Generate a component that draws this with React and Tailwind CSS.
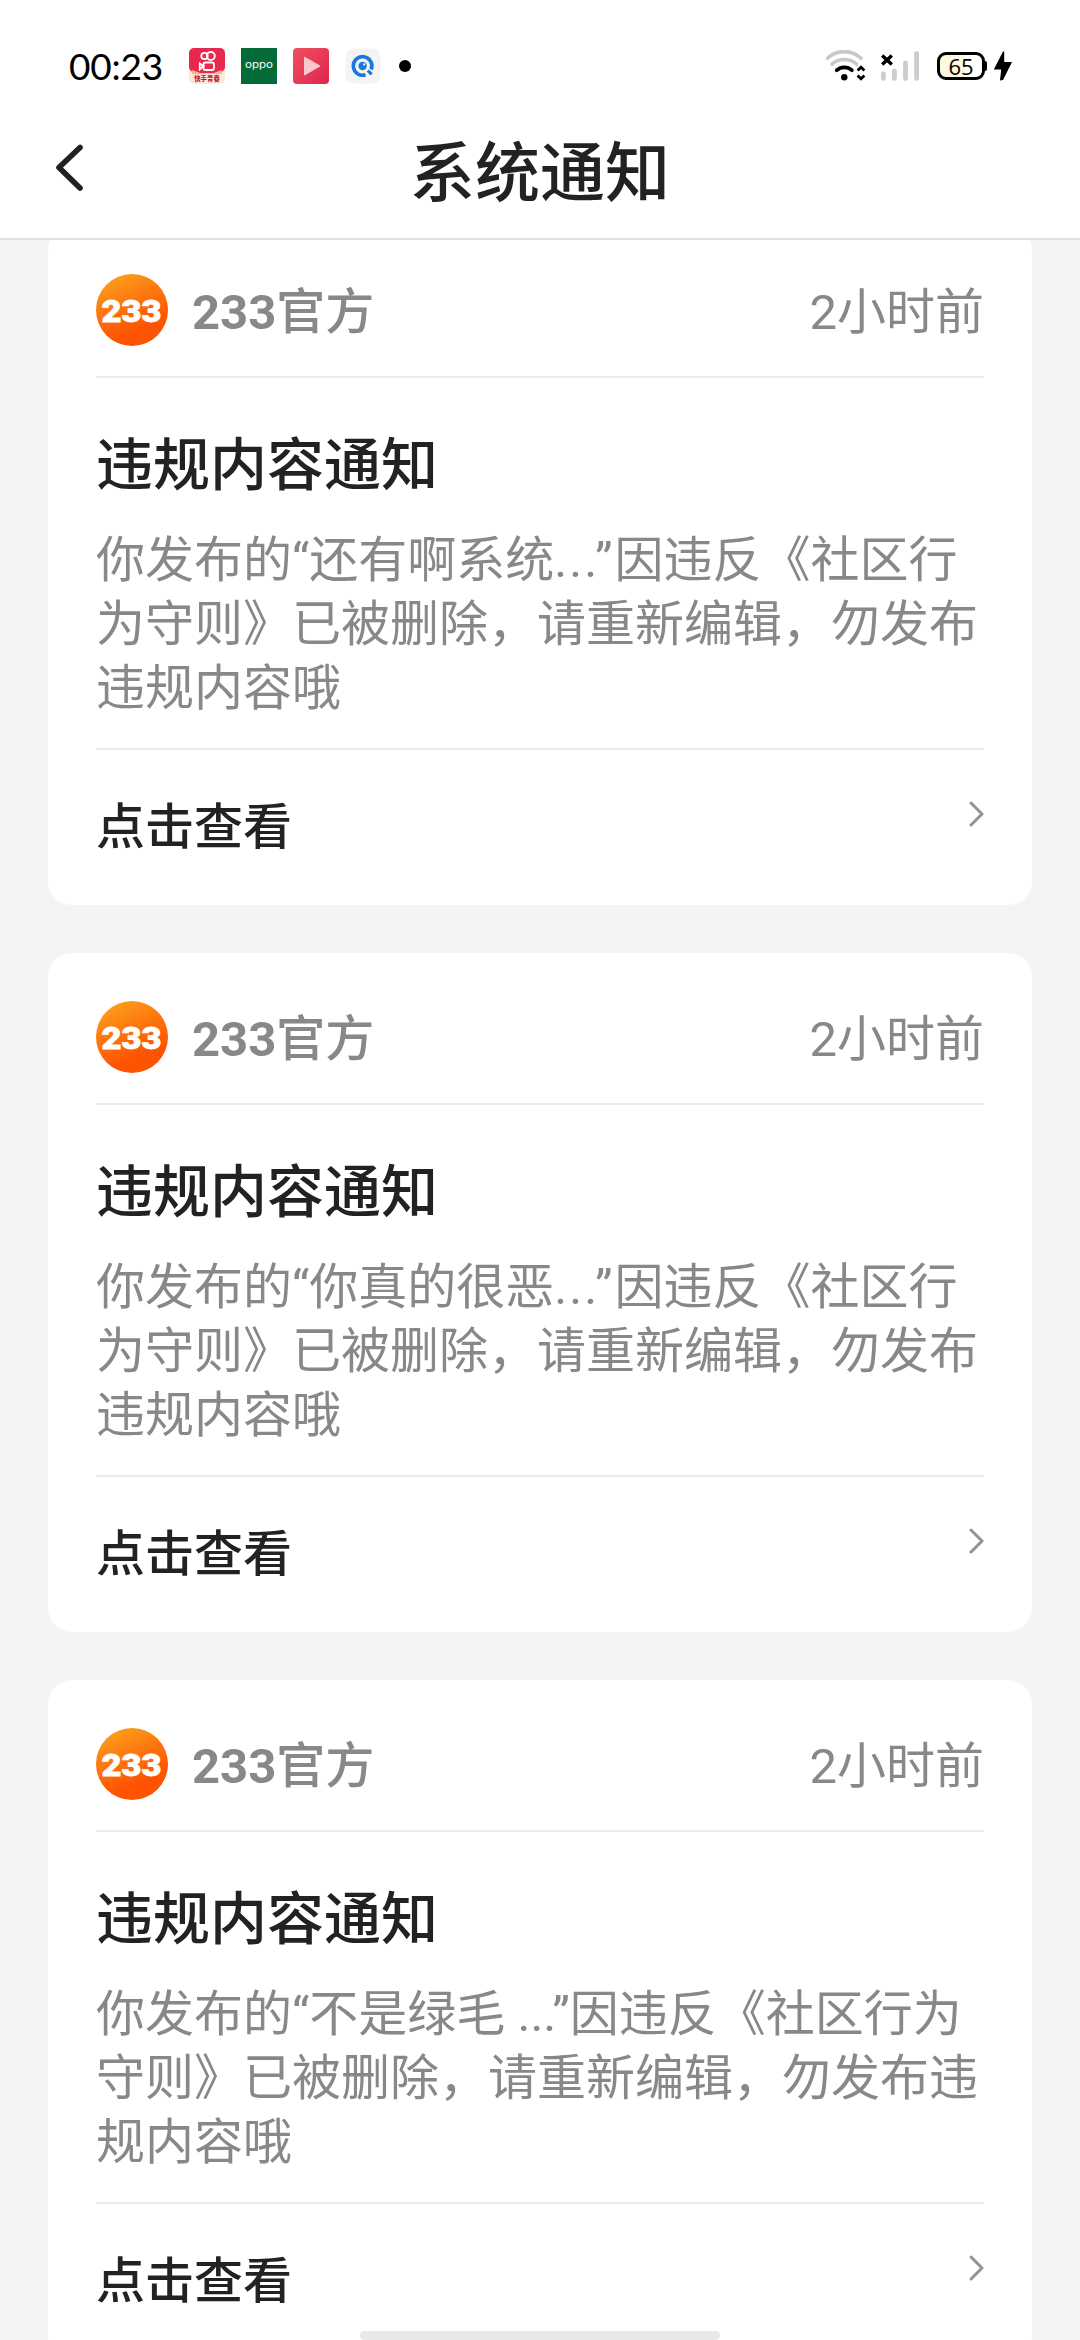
import React from 'react';
import { clsx } from 'clsx';

const notices = [
    { id: 1, quote: '还有啊系统', tail: '因违反《社区行', wide: true, lines: ['为守则》已被删除，请重新编辑，勿发布', '违规内容哦'] },
    { id: 2, quote: '你真的很恶', tail: '因违反《社区行', wide: true, lines: ['为守则》已被删除，请重新编辑，勿发布', '违规内容哦'] },
    { id: 3, quote: '不是绿毛 ', tail: '因违反《社区行为', wide: false, lines: ['守则》已被删除，请重新编辑，勿发布违', '规内容哦'] },
];

const VideoAppIcon = () => (
    <svg className="w-9 h-9" viewBox="0 0 36 36">
        <rect width="36" height="36" rx="5" fill="#fde9dc" />
        <path d="M5 0H31A5 5 0 0 1 36 5V20Q34 25 28 25H8Q2 25 0 20V5A5 5 0 0 1 5 0Z" fill="#e9284f" />
        <path d="M3 22Q18 29 33 22V26H3Z" fill="#f5b48c" />
        <g fill="none" stroke="#fff" strokeWidth="1.8">
            <circle cx="15.5" cy="8" r="3.2" />
            <circle cx="21.8" cy="8" r="4" />
            <rect x="14.5" y="14.5" width="10.5" height="7.5" rx="2" />
            <path d="M14.5 18L10.8 15.5V21.5Z" />
        </g>
        <text x="18" y="33" textAnchor="middle" fontSize="6.4" fontWeight="900" fill="#c51f35" className="font-['Noto_Sans_CJK_SC',sans-serif]">快手青春</text>
    </svg>
);

const OppoIcon = () => (
    <svg className="w-9 h-9 bg-[#046a38]" viewBox="0 0 36 36">
        <text x="4" y="20" fontSize="9.5" textLength="28" lengthAdjust="spacingAndGlyphs" fill="#fff" className="font-['Inter',sans-serif]">oppo</text>
    </svg>
);

const PlayIcon = () => (
    <svg className="w-9 h-9" viewBox="0 0 36 36">
        <defs>
            <linearGradient id="play" x1="0" y1="0" x2="1" y2="1">
                <stop offset="0" stopColor="#f0505f" />
                <stop offset="1" stopColor="#df2450" />
            </linearGradient>
        </defs>
        <rect width="36" height="36" rx="4" fill="url(#play)" />
        <path d="M11.5 9.2L27 18L11.5 27Z" fill="#fac8cf" stroke="#fac8cf" strokeLinejoin="round" />
    </svg>
);

const BrowserIcon = () => (
    <svg className="w-9 h-9" viewBox="0 0 36 36">
        <rect x="0.5" y="0.5" width="35" height="35" rx="8" fill="#f4f4f5" />
        <path d="M20.5 26.8A9.3 9.3 0 1 1 26.2 21.5" fill="none" stroke="#1c77dc" strokeWidth="3.6" />
        <circle cx="17.6" cy="18" r="4.2" fill="#1c77dc" />
        <circle cx="19.2" cy="16.4" r="1.1" fill="#fff" />
        <path d="M22.8 22.5L26.6 26.4" stroke="#1c77dc" strokeWidth="3.2" />
    </svg>
);

const WifiIcon = () => (
    <svg className="w-10 h-8" viewBox="0 0 40 32" fill="none">
        <path d="M1.5 8.2C11 -0.6 25.5 -0.6 35 8.2" stroke="#c9c9c9" strokeWidth="3.6" strokeLinecap="round" />
        <path d="M6 14.2C13 8 23.5 8 30.5 14.2" stroke="#c9c9c9" strokeWidth="3.6" strokeLinecap="round" />
        <path d="M10.8 20.2C15 16.4 21.6 16.4 25.8 20.2" stroke="#000" strokeWidth="3.8" strokeLinecap="round" />
        <circle cx="18.3" cy="27.3" r="3.2" fill="#000" />
        <path d="M31.6 20.4L35 17.2L38.4 20.4M31.6 25.6L35 28.8L38.4 25.6" stroke="#000" strokeWidth="2.8" />
    </svg>
);

const SignalIcon = () => (
    <svg className="w-10 h-8" viewBox="0 0 40 32" fill="none">
        <g stroke="#cdcdcd" strokeWidth="4.8" strokeLinecap="round">
            <path d="M3.4 24V28.5M14.4 21V28.5M25.5 13V28.5M36.6 3.5V28.5" />
        </g>
        <path d="M2.2 5.4L11.8 14.6M11.8 5.4L2.2 14.6" stroke="#000" strokeWidth="3.4" />
    </svg>
);

const BatteryIcon = () => (
    <div className="flex items-center">
        <div className="w-12 h-7 border-3 border-black rounded-[9px] bg-[linear-gradient(to_right,#fdf8df_62%,#fff_62%)] flex items-center justify-center font-['Open_Sans',sans-serif] text-[22px] leading-none">65</div>
        <div className="w-0.5 h-2.5 bg-black rounded-r-sm" />
        <svg className="w-5 h-[30px] ml-1.5" viewBox="0 0 20 30">
            <path d="M10 0.5L0.8 18.5H8.2L7 29.5L10 29L19 11H11.2V0.5Z" fill="#000" />
        </svg>
    </div>
);

const StatusBar = () => (
    <div className="h-[132px] pl-[69px] pr-[67px] flex items-center justify-between">
        <div className="flex items-center">
            <span className="w-[120px] pb-0.5 font-['Lato',sans-serif] text-[37px] leading-none tracking-[-0.2px]">00:23</span>
            <div className="flex items-center gap-4">
                <VideoAppIcon />
                <OppoIcon />
                <PlayIcon />
                <BrowserIcon />
                <div className="w-3 h-3 ml-0.5 rounded-full bg-black" />
            </div>
        </div>
        <div className="flex items-center">
            <WifiIcon />
            <div className="w-3.5" />
            <SignalIcon />
            <div className="w-[17px]" />
            <BatteryIcon />
        </div>
    </div>
);

const Header = () => (
    <header className="relative z-10 h-60 bg-white border-b-2 border-[#e0e0e0]">
        <StatusBar />
        <div className="h-[78px] px-[54px] flex items-start justify-between">
            <svg className="w-8 h-[50px] mt-[11px]" viewBox="0 0 32 50" fill="none" stroke="#222" strokeWidth="5.6" strokeLinecap="round" strokeLinejoin="round">
                <path d="M26 4.5L5 24.5L26 45" />
            </svg>
            <h1 className="pt-2.5 text-[65px] leading-none font-medium text-[#222]">系统通知</h1>
            <div className="w-8" />
        </div>
    </header>
);

const Avatar = () => (
    <svg className="w-[72px] h-[72px] mr-6" viewBox="0 0 72 72">
        <defs>
            <linearGradient id="avatar" x1="0.15" y1="0" x2="0.5" y2="0.8">
                <stop offset="0" stopColor="#fca51c" />
                <stop offset="0.5" stopColor="#fd7a10" />
                <stop offset="1" stopColor="#fe5402" />
            </linearGradient>
        </defs>
        <circle cx="36" cy="36" r="36" fill="url(#avatar)" />
        <text x="5.5" y="47.5" fontSize="32" fontWeight="900" textLength="60" lengthAdjust="spacingAndGlyphs" fill="#fff" stroke="#fff" strokeWidth="0.8" className="font-['Roboto',sans-serif]">233</text>
    </svg>
);

const NoticeCard = ({ notice, last }) => (
    <article className={clsx('h-[679px] shrink-0 bg-white rounded-3xl px-12 pt-12 text-[49px]', !last && 'mb-12')}>
        <div className="h-[104px] pb-[30px] border-b-2 border-[#ececec] flex items-center text-[#888]">
            <Avatar />
            <span className="font-medium leading-[72px] pt-1.5"><b className="font-bold">233</b>官方</span>
            <span className="ml-auto leading-[72px] pt-1.5">2小时前</span>
        </div>
        <div className="h-[372px] pt-[50px] border-b-2 border-[#ececec]">
            <h2 className="text-[57px] leading-[76px] font-medium text-[#222]">违规内容通知</h2>
            <p className="mt-[25px] leading-16 text-[#888] whitespace-nowrap">
                <span className="block">
                    你发布的“{notice.quote}
                    <span className={clsx(notice.wide && 'tracking-[2px]')}>...”</span>
                    {notice.tail}
                </span>
                {notice.lines.map((line) => (
                    <span key={line} className="block">{line}</span>
                ))}
            </p>
        </div>
        <div className="flex justify-between">
            <span className="pt-10 leading-[76px] font-medium text-[#222]">点击查看</span>
            <svg className="w-4 h-7 mt-[50px]" viewBox="0 0 16 28" fill="none" stroke="#939393" strokeWidth="3" strokeLinecap="round" strokeLinejoin="round">
                <path d="M3 3L14 14L3 25" />
            </svg>
        </div>
    </article>
);

const App = () => (
    <div className="w-[1080px] h-[2340px] relative overflow-hidden bg-[#f4f4f4] text-black font-['Roboto','Noto_Sans_CJK_SC',sans-serif]">
        <Header />
        <main className="-mt-3.5 px-12 flex flex-col">
            {notices.map((notice, index) => (
                <NoticeCard key={notice.id} notice={notice} last={index === notices.length - 1} />
            ))}
        </main>
        <div className="absolute bottom-0 left-[360px] w-[360px] h-[9px] rounded-full bg-[#e8e8e8]" />
    </div>
);

export default App;
